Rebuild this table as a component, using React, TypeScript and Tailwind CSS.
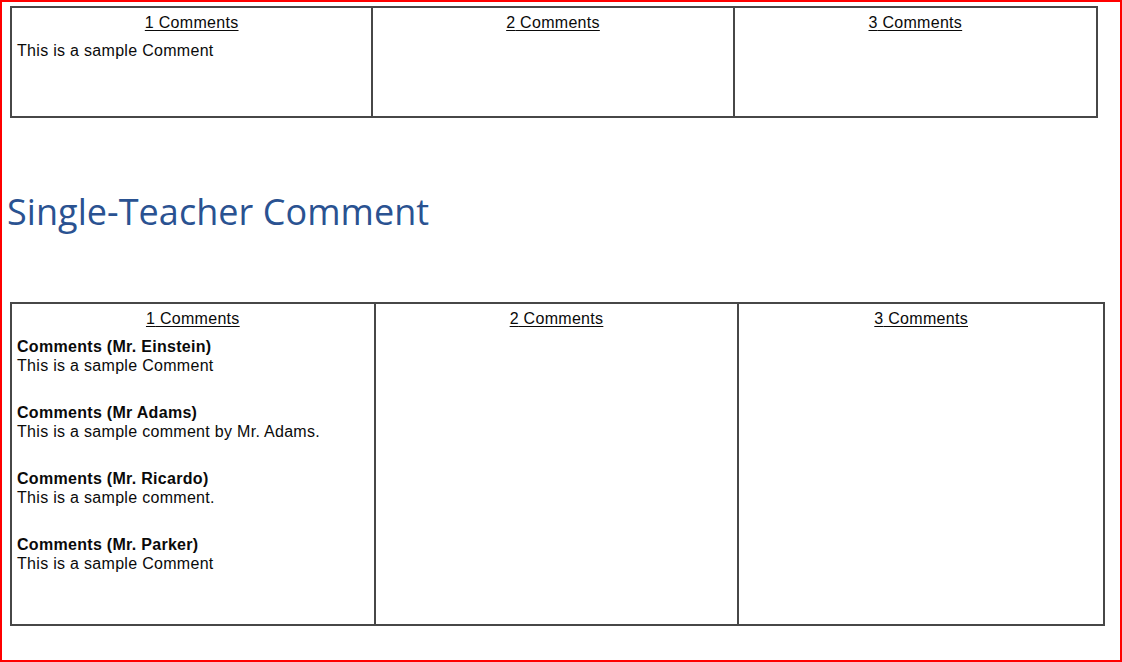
import React from "react";

const cellText = "font-['Liberation_Sans',Arial,sans-serif] text-[16px] leading-[18px] tracking-[0.3px] text-[#0a0a0a]";

function Header({ n }: { n: number }) {
  return (
    <div className="text-center">
      <span className="underline underline-offset-[2px] decoration-[1px]">{n} Comments</span>
    </div>
  );
}

const teachers = [
  { name: "Comments (Mr. Einstein)", text: "This is a sample Comment" },
  { name: "Comments (Mr Adams)", text: "This is a sample comment by Mr. Adams." },
  { name: "Comments (Mr. Ricardo)", text: "This is a sample comment." },
  { name: "Comments (Mr. Parker)", text: "This is a sample Comment" },
];

export default function App() {
  return (
    <div className="w-[1122px] h-[662px] border-2 border-[#ff0000] bg-white box-border pt-[4px] pl-[8px]">
      {/* Top table */}
      <div className={`grid grid-cols-3 w-[1088px] h-[112px] border-2 border-[#474747] ${cellText}`}>
        <div className="border-r-2 border-[#474747] pt-[6px] px-[5px]">
          <Header n={1} />
          <div className="mt-[10px]">This is a sample Comment</div>
        </div>
        <div className="border-r-2 border-[#474747] pt-[6px] px-[5px]">
          <Header n={2} />
        </div>
        <div className="pt-[6px] px-[5px]">
          <Header n={3} />
        </div>
      </div>

      <h1 className="mt-[76px] ml-[-3px] font-['Open_Sans',sans-serif] text-[36px] leading-[36px] tracking-[0.05px] text-[#2A5291]">
        Single-Teacher Comment
      </h1>

      {/* Bottom table */}
      <div className={`mt-[72px] grid grid-cols-3 w-[1095px] h-[324px] border-2 border-[#474747] ${cellText}`}>
        <div className="border-r-2 border-[#474747] pt-[6px] px-[5px]">
          <Header n={1} />
          <div className="mt-[10px] flex flex-col gap-[29px]">
            {teachers.map((t) => (
              <div key={t.name}>
                <div className="font-bold">{t.name}</div>
                <div className="mt-[1px]">{t.text}</div>
              </div>
            ))}
          </div>
        </div>
        <div className="border-r-2 border-[#474747] pt-[6px] px-[5px]">
          <Header n={2} />
        </div>
        <div className="pt-[6px] px-[5px]">
          <Header n={3} />
        </div>
      </div>
    </div>
  );
}
